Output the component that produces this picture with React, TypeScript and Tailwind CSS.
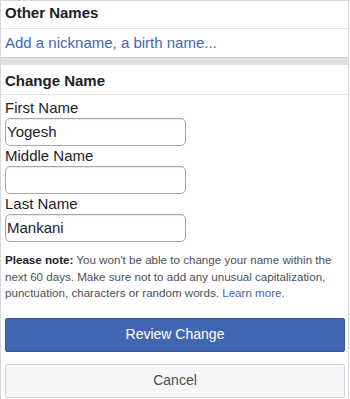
import React from "react";

export default function App() {
  return (
    <div className="w-[350px] h-[399px] bg-white overflow-hidden font-['Liberation_Sans',Arial,sans-serif]">
      <div className="w-[349px] h-[399px] border-x border-t border-[#d6d7da] bg-white">
        <div className="h-[28px] pt-[2px] px-[4px] text-[15px] leading-[20px] font-bold text-[#1d2129] border-b border-[#e5e5e5]">
          Other Names
        </div>
        <div className="h-[28px] pt-[4px] px-[4px] text-[15px] leading-[20px] text-[#4267b2]">
          Add a nickname, a birth name...
        </div>
        <div className="h-[8px] bg-[#dddfe2] border-t border-[#cfd1d5]"></div>
        <div className="h-[30px] pt-[6px] px-[4px] text-[15px] leading-[20px] font-bold text-[#1d2129] border-b border-[#e5e5e5]">
          Change Name
        </div>
        <div className="px-[4px] pt-[3px]">
          <div className="text-[15px] leading-[20px] text-[#1d2129]">First Name</div>
          <div className="w-[181px] h-[28px] rounded-[5px] border border-[#a8a8a8] shadow-[inset_0_1px_1px_rgba(0,0,0,0.08)] px-[1px] text-[15px] leading-[26px] text-[#1d2129]">
            Yogesh
          </div>
          <div className="text-[15px] leading-[20px] text-[#1d2129]">Middle Name</div>
          <div className="w-[181px] h-[28px] rounded-[5px] border border-[#a8a8a8] shadow-[inset_0_1px_1px_rgba(0,0,0,0.08)] px-[1px] text-[15px] leading-[26px] text-[#1d2129]"></div>
          <div className="text-[15px] leading-[20px] text-[#1d2129]">Last Name</div>
          <div className="w-[181px] h-[28px] rounded-[5px] border border-[#a8a8a8] shadow-[inset_0_1px_1px_rgba(0,0,0,0.08)] px-[1px] text-[15px] leading-[26px] text-[#1d2129]">
            Mankani
          </div>
          <p className="mt-[10px] text-[11.6px] leading-[16.5px] text-[#4b4f56] pr-[4px]">
            <span className="font-bold text-[#1d2129]">Please note:</span> You won't be able to change your name within the next 60 days. Make sure not to add any unusual capitalization, punctuation, characters or random words.{" "}
            <span className="text-[#4267b2]">Learn more.</span>
          </p>
          <div className="mt-[16px] w-[340px] h-[34px] rounded-[2px] bg-[#4267b2] border border-[#365899] flex items-center justify-center text-white text-[14px]">
            Review Change
          </div>
          <div className="mt-[12px] w-[340px] h-[34px] rounded-[2px] bg-[#f5f6f7] border border-[#d3d6db] flex items-center justify-center text-[#4b4f56] text-[14px]">
            Cancel
          </div>
        </div>
      </div>
    </div>
  );
}
